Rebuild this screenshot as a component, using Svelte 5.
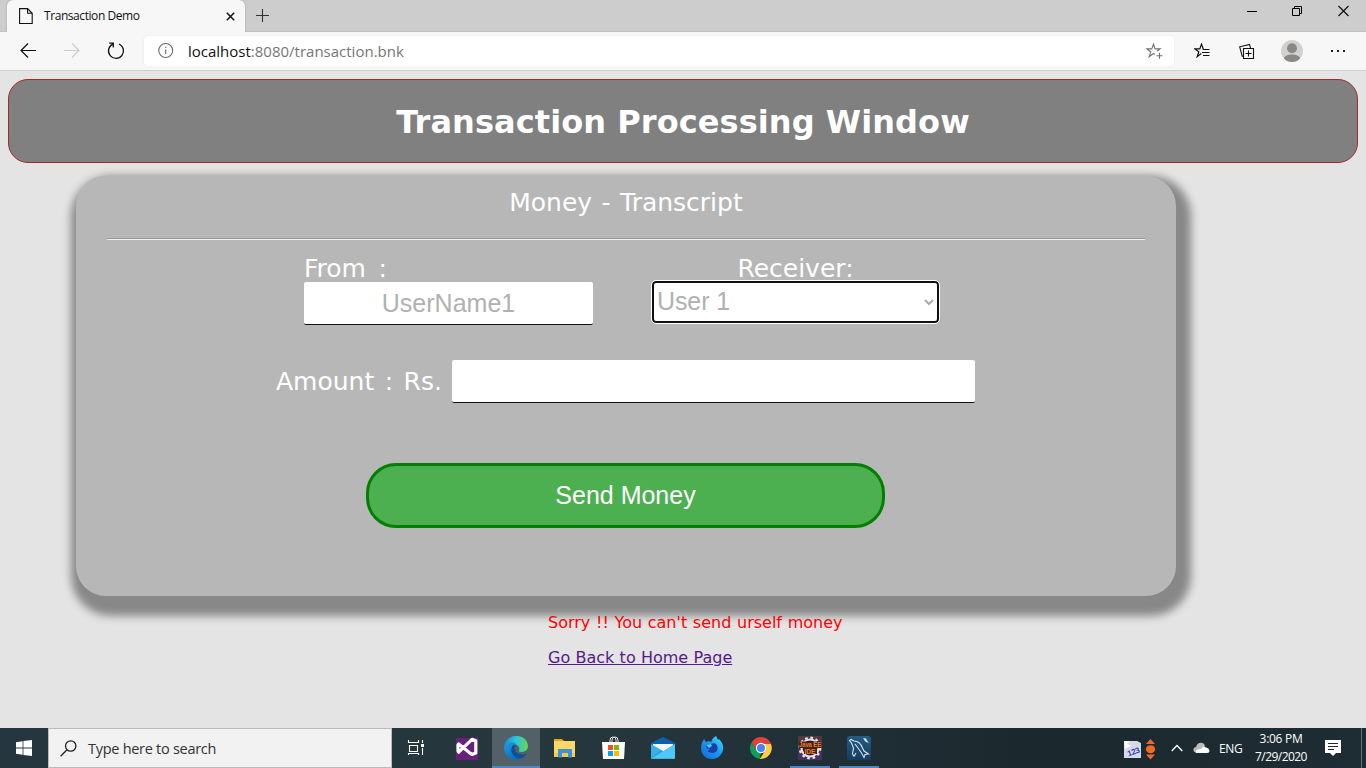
<script>
  let amount = $state('');
</script>

<div class="screen">
  <div class="tabs">
    <div class="tab">
      <svg class="file" width="14" height="17" viewBox="0 0 14 17" fill="none" stroke="#111" stroke-width="1.1"><path d="M.6.6H8.6L13.2 5.3V15.5H.6zM8.6.6V5.3H13.2" /></svg>
      <span class="tabname">Transaction Demo</span>
      <svg class="closetab" width="9" height="9" viewBox="0 0 9 9" stroke="#111" stroke-width="1.5"><path d="M.8.8L8.2 8.2M8.2.8L.8 8.2" /></svg>
    </div>
    <svg class="plus" width="13" height="13" viewBox="0 0 13 13" stroke="#333" stroke-width="1.1"><path d="M6.5 0V13M0 6.5H13" /></svg>
    <div class="wincontrols">
      <svg width="10" height="12" viewBox="0 0 10 12" stroke="#000"><path d="M0 6.5H10" /></svg>
      <svg width="11" height="12" viewBox="0 0 11 12" fill="none" stroke="#000"><path d="M.5 3.5H7.5V10.5H.5zM2.5 3.5V1.5H9.5V8.5H7.5" /></svg>
      <svg width="11" height="12" viewBox="0 0 11 12" stroke="#111" stroke-width="1.2"><path d="M.5 1L10.5 11M10.5 1L.5 11" /></svg>
    </div>
  </div>

  <div class="toolbar">
    <svg class="back" width="16" height="16" viewBox="0 0 16 16" fill="none" stroke="#111" stroke-width="1.2"><path d="M16 7.5H1M8 .5L1 7.5L8 14.5" /></svg>
    <svg class="fwd" width="16" height="16" viewBox="0 0 16 16" fill="none" stroke="#ccc" stroke-width="1.2"><path d="M0 7.5H15M8 .5L15 7.5L8 14.5" /></svg>
    <svg class="reload" width="18" height="18" viewBox="0 0 18 18" fill="none" stroke="#111" stroke-width="1.3"><path d="M12 2A7.5 7.5 0 1 1 5.8 2.1M2.2 1.2H6.3V5.4" /></svg>
    <div class="address">
      <svg class="info" width="16" height="16" viewBox="0 0 16 16" fill="none" stroke="#6b6b6b" stroke-width="1.1"><circle cx="7.7" cy="7.5" r="7" /><path d="M7.7 6.5V11.1M7.7 3.8V5.1" /></svg>
      <span class="url"><b>localhost</b>:8080/transaction.bnk</span>
      <svg class="fav" width="17" height="16" viewBox="0 0 17 16" fill="none" stroke="#707070" stroke-width="1.1"><path d="M8.9 11.4L7.5 10.5L3.2 13.7L4.8 8.8L.9 5.9H5.8L7.5 1.1L9.1 5.9H14.1L11 8.3M13.5 9.8V15.8M10.5 12.8H16.5" /></svg>
    </div>
    <svg class="favs" width="17" height="16" viewBox="0 0 17 16" fill="none" stroke="#111" stroke-width="1.2"><path d="M7.3 10.6L3.2 13.7L4.8 8.8L.9 5.9H5.8L7.5 1.1L9.3 6.2M8.7 6.5H15.5M8 9.5H15.5M9 12.5H15.5" /></svg>
    <svg class="coll" width="16" height="17" viewBox="0 0 16 17" fill="none" stroke="#111" stroke-width="1.1"><path d="M4.5 5.5H14.5V15.5H4.5zM9.5 7.5V13.5M6.5 10.5H12.5M11.5 5.2L10.5 1.4L.7 3.8L3.2 13.2H4.4" /></svg>
    <svg class="avatar" width="22" height="22" viewBox="0 0 22 22"><defs><clipPath id="avatar-disc"><circle cx="11" cy="11" r="11" /></clipPath></defs><circle cx="11" cy="11" r="11" fill="#d2d0ce" /><g clip-path="url(#avatar-disc)" fill="#8a8886"><circle cx="11" cy="8.3" r="5" /><ellipse cx="11" cy="19" rx="8.3" ry="4.6" /></g></svg>
    <svg class="more" width="16" height="4" viewBox="0 0 16 4" fill="#222"><path d="M1 1H3V3H1zM7 1H9V3H7zM13 1H15V3H13z" /></svg>
  </div>

  <main>
    <h1><span>Transaction Processing Window</span></h1>
    <section class="card">
      <div class="cardtitle">Money - Transcript</div>
      <hr />
      <div class="parties">
        <div class="party">
          <label for="from">From :</label>
          <input id="from" class="from" value="UserName1" disabled />
        </div>
        <div class="party receiver">
          <div class="rlabel">Receiver:</div>
          <div class="select"><span>User 1</span><svg width="10" height="7" viewBox="0 0 10 7" fill="none" stroke="#a9a9a9" stroke-width="2"><path d="M1 1L5 5L9 1" /></svg></div>
        </div>
      </div>
      <div class="amount">
        <label for="amount">Amount : Rs.</label>
        <input id="amount" bind:value={amount} />
      </div>
      <button>Send Money</button>
    </section>
    <div class="messages">
      <p>Sorry !! You can't send urself money</p>
      <a href="#home">Go Back to Home Page</a>
    </div>
  </main>

  <footer>
    <div class="start"><svg width="16" height="16" viewBox="0 0 16 16" fill="#fff"><path d="M0 2.2L6.6 1.2V7.6H0zM7.4 1.1L16 0V7.6H7.4zM0 8.4H6.6V14.8L0 13.8zM7.4 8.4H16V16L7.4 14.9z" /></svg></div>
    <div class="search">
      <svg width="17" height="17" viewBox="0 0 17 17" fill="none" stroke="#222" stroke-width="1.3"><circle cx="10.7" cy="6" r="5.2" /><path d="M7 9.8L.6 16.2" /></svg>
      <span>Type here to search</span>
    </div>
    <div class="apps">
      <div class="app">
        <svg viewBox="0 0 24 24" fill="none" stroke="#fff" stroke-width="1.1"><path d="M2.5 4V6.5H12.5V4M3.5 9.5H11.5V15.5H3.5zM2.5 19V17.5H12.5V19M16.5 4V7M16.5 12V19" /><path d="M15 8H18V11H15z" fill="#fff" stroke="none" /></svg>
      </div>
      <div class="app">
        <svg viewBox="0 0 24 24"><path d="M1 2H20L23 0V24H1z" fill="#68217a" /><path d="M3.7 8L16.8 18.5L20.8 17V4.8L17 3.3L3.7 16.2L3 15V9z" fill="none" stroke="#fff" stroke-width="3.2" stroke-linejoin="round" /></svg>
      </div>
      <div class="app active">
        <svg viewBox="0 0 24 24"><defs><linearGradient id="edge-top" x1="0" x2="1"><stop stop-color="#168bd6" /><stop offset=".5" stop-color="#29c4e0" /><stop offset="1" stop-color="#66d94b" /></linearGradient><linearGradient id="edge-blue" x1="0" y1="0" x2="1" y2="1"><stop stop-color="#1e9ce5" /><stop offset="1" stop-color="#0959a9" /></linearGradient></defs><path d="M0 11C1-3 23-4 24 10C24 16 17 17 14.5 15C17 12 14 8 9 8C4 8 1 10 0 14z" fill="url(#edge-top)" /><path d="M0 12C1 7 8 5 12 8C9 8 7 11 8 15C9 20 16 21 22 17.5C19 23 13 25 8 23C3 21 0 17 0 12z" fill="url(#edge-blue)" /><path d="M8.8 9.5C5 15 9 23 17 22.2C20 21.2 22 19 22.4 17.5C17 20 11 17 10.5 13C10.3 11 11 9.8 12 9z" fill="#0b4f9c" /></svg>
      </div>
      <div class="app">
        <svg viewBox="0 0 24 24"><path d="M1 3H9L11 5V8H1z" fill="#e8a317" /><path d="M1 5H22V21H1z" fill="#ffd766" /><path d="M1 17H22V21H1z" fill="#f9c846" /><path d="M5 13H19V21.5H15V17H9V21.5H5z" fill="#3993dc" /></svg>
      </div>
      <div class="app">
        <svg viewBox="0 0 24 24"><path d="M8 9V4Q8 1 11 1Q14 1 14 4V7M10 6V4Q10 1 13 1Q16 1 16 4V9" stroke="#ddd" fill="none" /><path d="M0 6H23L22 23H1z" fill="#fff" /><path d="M6 9H11V14H6z" fill="#f25022" /><path d="M12 9H17V14H12z" fill="#7fba00" /><path d="M6 15H11V20H6z" fill="#00a4ef" /><path d="M12 15H17V20H12z" fill="#ffb900" /></svg>
      </div>
      <div class="app">
        <svg viewBox="0 0 24 24"><path d="M0 7L12 1L24 7V15H0z" fill="#0b61b0" /><path d="M2 8H22V14L12 17L2 14z" fill="#f5f5f5" /><path d="M0 8L12 15L0 23z" fill="#37b1e8" /><path d="M24 8V22.5H0L9.5 14L12 15.5z" fill="#28a2e5" /><path d="M0 22.8L24 8V22.8z" fill="#50c8f5" /></svg>
      </div>
      <div class="app">
        <svg viewBox="0 0 24 24"><defs><linearGradient id="fox" x1="0" y1="1" x2="1" y2="0"><stop stop-color="#1266d8" /><stop offset=".55" stop-color="#1b9bf0" /><stop offset="1" stop-color="#4ce3fb" /></linearGradient></defs><path d="M4 3L6 6L9 5L11 6L13 2L16 0L18 4L19 3C22 6 24 10 23 14C21 21 16 23 12 23C5 23 1 18 1 12C1 9 2 6 3 5z" fill="url(#fox)" /><path d="M6 9L11 8C15 6 18 9 17.5 13C17 17 11 18.5 7.5 15L10 13C7 13 6 12 6 9z" fill="#1d3ea8" /><path d="M6 9L11 8L12 10L9 12z" fill="#4ccdf5" /></svg>
      </div>
      <div class="app">
        <svg viewBox="0 0 24 24"><path d="M2.5 6.5A11 11 0 0 1 21.5 6.5L22 8H12L7.7 14.5z" fill="#db4437" /><path d="M2.5 6.5L7.7 14.5L12 17L10.8 23A11 11 0 0 1 2.5 6.5z" fill="#0f9d58" /><path d="M12 8H22A11 11 0 0 1 10.8 23L16.3 14.5z" fill="#ffcd40" /><circle cx="12" cy="12" r="5.2" fill="#fff" /><circle cx="12" cy="12" r="4" fill="#4285f4" /></svg>
      </div>
      <div class="app running">
        <svg viewBox="0 0 24 24" overflow="visible"><path d="M0 0H24V24H0z" fill="#46305f" /><path d="M0 0H24V12H0z" fill="#543642" /><circle cx="12" cy="12" r="8.5" fill="#29232c" stroke="#e3e3e3" stroke-width="2.2" /><circle cx="12" cy="12" r="10.3" fill="none" stroke="#e3e3e3" stroke-width="2.2" stroke-dasharray="2.7 2.7" /><path d="M1 5.5H23V12H19V18H6V12H1z" fill="#3d231f" /><g fill="#f67c20" font-family="Liberation Sans" font-weight="bold" font-size="7"><text x="1" y="11.3" textLength="22" lengthAdjust="spacingAndGlyphs">Java EE</text><text x="6.5" y="17.6" textLength="11" lengthAdjust="spacingAndGlyphs">IDE</text></g></svg>
      </div>
      <div class="app running">
        <svg viewBox="0 0 24 24"><defs><linearGradient id="sea" x2="0" y2="1"><stop stop-color="#255c82" /><stop offset="1" stop-color="#173c60" /></linearGradient></defs><rect width="24" height="24" rx="2.5" fill="url(#sea)" /><path d="M7 20.5L5.5 18L6.5 12L4.5 7L2.5 4.5L4 3.5L7 5C11 5 14 8 15.5 12L17 15L21.5 18L18 18.5L17 21.5L14.5 17L11 12L8 8M7 20.5L9 17" fill="none" stroke="#d5e3ed" stroke-width="1.1" /><path d="M16 2L19 2.5L20 4.5L22 7L19 6L17.5 4.5z" fill="#d5e3ed" /></svg>
      </div>
    </div>
    <div class="tray">
      <svg class="ime" width="32" height="22" viewBox="0 0 32 22"><path d="M0 2H13L17 4V19H0z" fill="#d5d9ea" /><path d="M0 2H6L3 5L7 7L1 10z" fill="#fff" /><text x="4.5" y="17.5" transform="rotate(-20 4.5 17.5)" font-family="Liberation Sans" font-weight="bold" font-size="8" fill="#3939ac">123</text><g fill="#ed6b24"><path d="M22 5L26.5 0L31 5zM22 15.5L26.5 20.5L31 15.5z" /><ellipse cx="26.5" cy="10.2" rx="4.6" ry="4" /></g></svg>
      <svg class="chev" width="12" height="8" viewBox="0 0 12 8" fill="none" stroke="#fff" stroke-width="1.3"><path d="M.7 7L6 1.5L11.3 7" /></svg>
      <svg class="cloud" width="17" height="12" viewBox="0 0 17 12"><path d="M2.5 10.5Q0 9.5.5 7Q1 5 3.2 5Q4 .8 8 .8Q11 .8 12 4L8 10.5z" fill="#bcbcbc" /><path d="M3 11Q2 8.5 5 7.5L8 7Q10 3.5 13 5.5Q16 6 16.5 8.5Q16.5 11 14 11z" fill="#fff" /></svg>
      <span class="lang">ENG</span>
      <div class="clock"><span class="time">3:06 PM</span><span class="date">7/29/2020</span></div>
      <svg class="note" width="16" height="16" viewBox="0 0 16 16"><path d="M0 0H16V13H11L8 16L5 13H0z" fill="#fff" /><path d="M3 3.5H13M3 6.5H13M3 9.5H9" stroke="#1d2b32" /></svg>
      <i class="peek"></i>
    </div>
  </footer>
</div>

<style>
  :global(body) { margin: 0; overflow: hidden; }
  * { box-sizing: border-box; }
  svg { display: block; flex: none; }
  .screen { width: 1366px; height: 768px; display: flex; flex-direction: column; background: #e4e4e4; font-family: "DejaVu Sans", sans-serif; }
  .tabs { height: 32px; display: flex; background: #cdcdcd; border-bottom: 1px solid #c2c2c2; }
  .tab { width: 238px; height: 32px; margin-left: 7px; padding: 0 10px 0 12px; display: flex; align-items: center; background: #f7f7f7; border-radius: 6px 6px 0 0; box-shadow: 0 0 2px #999; clip-path: inset(0 -3px 0 -3px); }
  .tabname { margin: -1px 0 0 11px; font: 12px "Open Sans", sans-serif; letter-spacing: -.43px; color: #111; white-space: nowrap; }
  .closetab { margin-left: auto; }
  .plus { margin: 9px 0 0 11px; }
  .wincontrols { margin: 5px 17px 0 auto; display: flex; gap: 35px; }
  .toolbar { height: 39px; display: flex; align-items: center; background: #f7f7f7; border-bottom: 1px solid #d0d0d0; }
  .back { margin-left: 20px; }
  .fwd { margin-left: 28px; }
  .reload { margin-left: 27px; }
  .address { width: 1030px; height: 30px; margin-left: 19px; padding: 0 11px 0 14px; display: flex; align-items: center; background: #fff; border-radius: 4px; box-shadow: 0 0 2px #e3e3e3; }
  .url { margin-left: 14px; font: 15px "Open Sans", sans-serif; color: #767676; white-space: nowrap; }
  .url b { color: #111; font-weight: 400; }
  .fav { margin-left: auto; }
  .favs { margin-left: 20px; }
  .coll { margin-left: 28px; }
  .avatar { margin-left: 26px; }
  .more { margin-left: 27px; }
  main { height: 657px; padding: 8px; flex: none; }
  h1 { height: 84px; margin: 0; padding-top: 1px; display: flex; align-items: center; justify-content: center; background: #808080; border: 1px solid #a52a2a; border-radius: 20px; color: #fff; font-size: 32px; line-height: 38px; letter-spacing: .07px; white-space: nowrap; }
  .card { width: 1100px; height: 420px; margin: 13px 0 0 68px; padding: 9px 31px 0 31px; background: #b7b7b7; border-radius: 30px; box-shadow: 5px 10px 8px 10px #888; color: #fff; font-size: 25px; line-height: 36px; }
  .cardtitle { text-align: center; word-spacing: 1.5px; }
  hr { height: 2px; margin: 17px 0 0; border: 0; border-top: 1px solid #969696; background: #eee; }
  .parties { display: flex; gap: 59px; margin: 13px 0 0 197px; line-height: 32px; }
  .party { width: 289px; display: flex; flex-direction: column; }
  .party label, .rlabel { height: 29px; white-space: nowrap; }
  .party label { word-spacing: 4.5px; }
  input { height: 43px; border: 0; border-bottom: 1px solid #111; border-radius: 2px; background: #fff; color: #b1b1b1; font: 25px "Liberation Sans", sans-serif; text-align: center; outline: 0; }
  .from { width: 289px; padding: 0; }
  .receiver { width: 287px; }
  .rlabel { text-align: center; }
  .select { width: 287px; height: 42px; margin-top: -1px; padding: 0 3px 0 3px; display: flex; align-items: center; justify-content: space-between; background: #fff; border: 2px solid #101010; border-radius: 4px; outline: 1px solid #fff; color: #b1b1b1; font: 25px "Liberation Sans", sans-serif; }
  .select span { padding-bottom: 2px; letter-spacing: -.1px; }
  .amount { display: flex; align-items: center; gap: 8px; margin: 35px 0 0 169px; white-space: nowrap; }
  .amount label { width: 168px; word-spacing: 2.5px; }
  .amount input { width: 523px; }
  button { display: block; width: 519px; height: 65px; margin: 60px 0 0 259px; background: #4caf50; border: 3px solid #008000; border-radius: 30px; color: #fff; font: 25px "Liberation Sans", sans-serif; }
  .messages { margin: 17px 0 0 540px; font-size: 16px; line-height: 20px; white-space: nowrap; }
  .messages p { margin: 0 0 15px; color: #f00; word-spacing: .6px; }
  .messages a { color: #551a8b; word-spacing: .2px; }
  footer { height: 40px; flex: none; display: flex; background: linear-gradient(90deg, #26363e, #26363d 45%, #1b292f 75%, #1e2c33); color: #fff; font-family: "Open Sans", sans-serif; }
  .start { width: 48px; display: flex; align-items: center; justify-content: center; }
  .search { width: 344px; display: flex; align-items: center; gap: 11px; padding-left: 11px; background: #f2f2f2; border: 1px solid #bcbcbc; color: #333; font-size: 14.5px; letter-spacing: -.28px; white-space: nowrap; }
  .apps { display: flex; gap: 1px; margin-left: 2px; }
  .app { width: 48px; height: 40px; display: flex; align-items: center; justify-content: center; }
  .app svg { width: 24px; height: 24px; }
  .active { background: #536067; border-bottom: 2px solid #4e86c4; padding-top: 2px; }
  .running { background: linear-gradient(#4e86c4, #4e86c4) center bottom / 40px 2px no-repeat; }
  .tray { margin-left: auto; display: flex; align-items: center; white-space: nowrap; font-size: 12px; letter-spacing: -.3px; }
  .ime { margin-top: 3px; }
  .chev { margin-left: 15px; }
  .cloud { margin-left: 10px; }
  .lang { width: 24px; margin-left: 9px; }
  .clock { width: 54px; margin-left: 11px; display: flex; flex-direction: column; align-items: center; line-height: 18px; }
  .date { letter-spacing: -.55px; }
  .note { margin-left: 17px; }
  .peek { width: 5px; height: 40px; margin-left: 20px; border-left: 1px solid #627078; }
</style>
